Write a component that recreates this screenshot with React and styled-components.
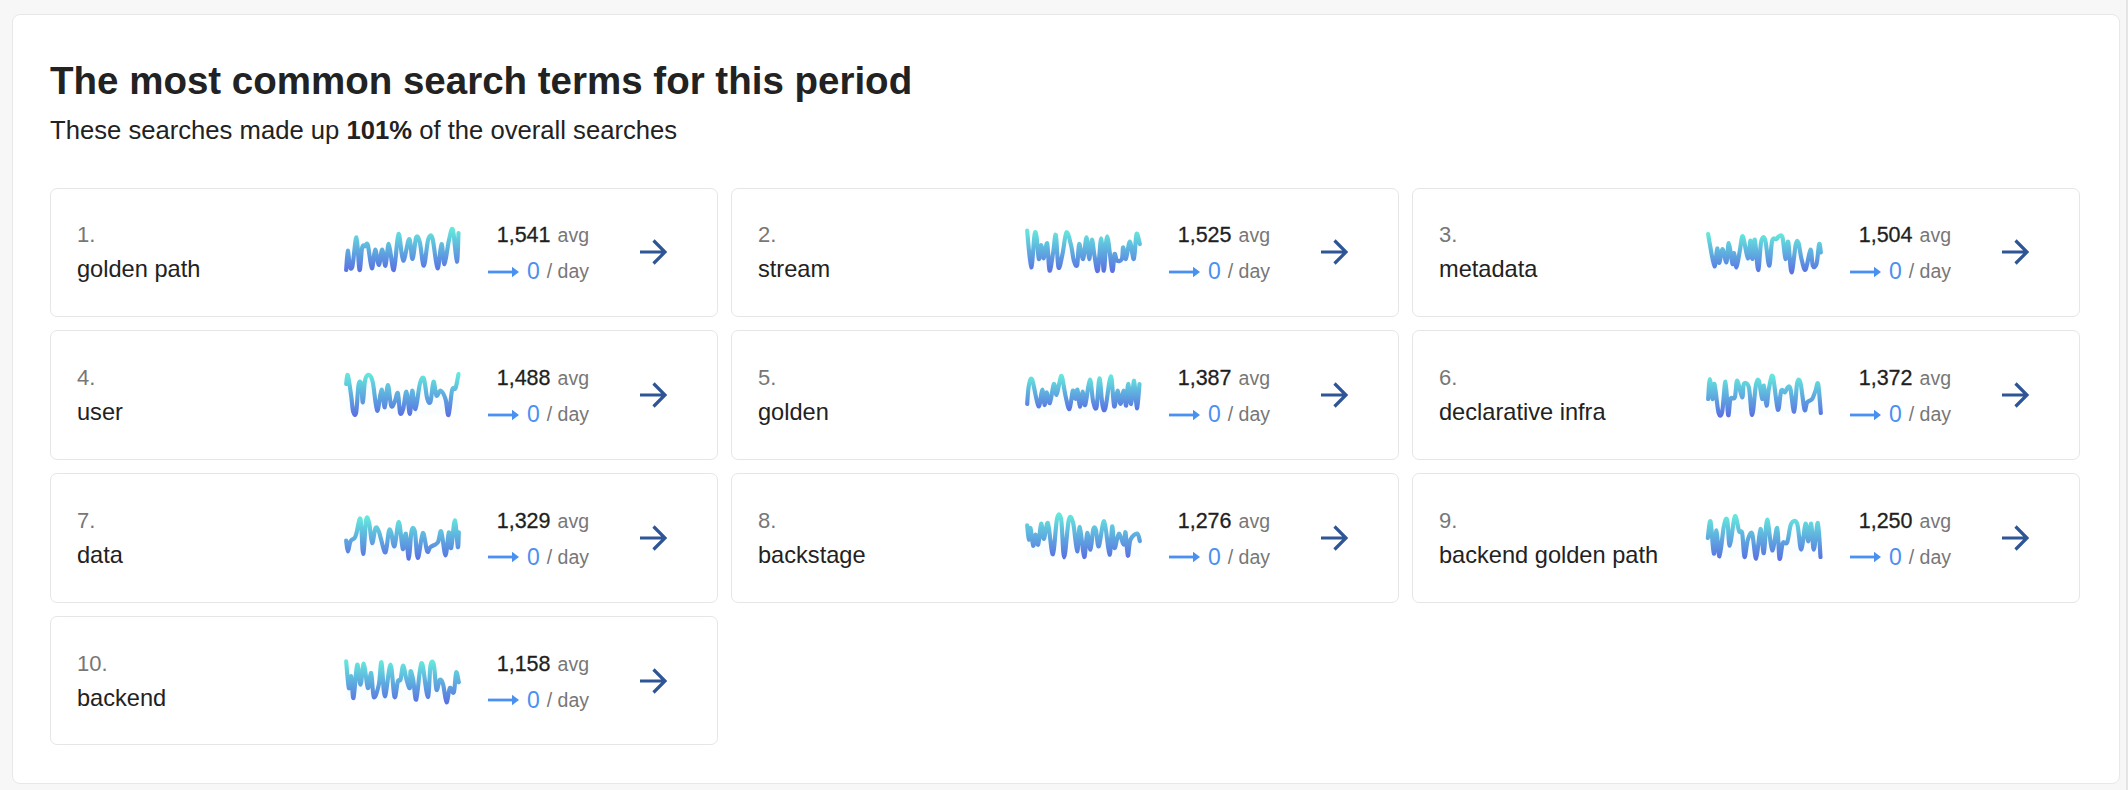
import React from 'react';
import styled, { createGlobalStyle } from 'styled-components';

const GlobalStyle = createGlobalStyle`
  html, body {
    margin: 0;
    padding: 0;
    background: #f7f7f7;
  }
  body {
    font-family: "Liberation Sans", Arial, sans-serif;
    overflow: hidden;
  }
`;

const Page = styled.div`
  box-sizing: border-box;
  width: 2128px;
  height: 790px;
  padding: 14px 6px 6px 11.5px;
  background: #f7f7f7;
  border-right: 2px solid #e5e5e5;
`;

const Panel = styled.section`
  box-sizing: border-box;
  height: 770px;
  padding: 44px 38px 0 37.5px;
  background: #fff;
  border: 1.5px solid #e8e8e8;
  border-radius: 8px;
`;

const Heading = styled.h2`
  margin: 0;
  font-size: 38.5px;
  line-height: 44px;
  font-weight: 700;
  color: #222;
`;

const Subheading = styled.p`
  margin: 11px 0 41.5px;
  font-size: 25.65px;
  line-height: 32px;
  color: #222;
`;

const Grid = styled.div`
  display: grid;
  grid-template-columns: repeat(3, 668px);
  grid-auto-rows: 129.6px;
  column-gap: 13px;
  row-gap: 13.2px;
`;

const Card = styled.article`
  box-sizing: border-box;
  display: flex;
  align-items: center;
  padding-left: 26px;
  background: #fff;
  border: 1.5px solid #e6e6e6;
  border-radius: 7px;
`;

const Term = styled.div`
  width: 264px;
  flex: none;
  padding-top: 1px;
`;

const Rank = styled.div`
  font-size: 22px;
  line-height: 34px;
  color: #777;
`;

const Name = styled.div`
  font-size: 23.6px;
  line-height: 35px;
  color: #222;
`;

const Chart = styled.svg`
  display: block;
  flex: none;
  width: 120px;
  height: 60px;
`;

const Stats = styled.div`
  width: 128px;
  flex: none;
  padding-top: 3px;
  text-align: right;
`;

const Average = styled.div`
  font-size: 21.5px;
  line-height: 36px;
  color: #1f1f1f;
  -webkit-text-stroke: 0.3px #1f1f1f;
`;

const Unit = styled.span`
  margin-left: 7px;
  font-size: 19.5px;
  color: #777;
  -webkit-text-stroke: 0;
`;

const Trend = styled.div`
  display: flex;
  align-items: center;
  justify-content: flex-end;
  line-height: 37px;
`;

const TrendValue = styled.span`
  margin-left: 8px;
  font-size: 23px;
  color: #4a90f0;
`;

const GoArrow = styled.svg`
  display: block;
  flex: none;
  width: 28px;
  height: 26px;
  margin-left: 50px;
`;

const terms = [
  { rank: 1, name: 'golden path', avg: '1,541', x0: 31.5, y0: 39, line: '47,183 52,125 58,172 66,170 78,85 87,183 95,115 103,112 112,108 124,178 134,122 145,168 155,122 165,170 175,105 190,183 204,75 218,155 236,90 246,150 257,85 268,100 280,170 293,92 306,88 321,178 333,105 342,165 355,95 367,62 379,158 384,72' },
  { rank: 2, name: 'stream', avg: '1,525', x0: 64.5, y0: 39, line: '80,65 92,175 102,78 108,82 115,150 122,108 130,148 140,103 147,185 158,130 166,78 174,175 186,135 198,70 212,110 220,155 230,168 236,105 248,150 258,85 266,150 274,92 282,140 292,185 302,88 310,185 320,82 335,185 342,135 350,155 364,150 368,115 376,150 388,98 400,150 408,75 418,105' },
  { rank: 3, name: 'metadata', avg: '1,504', x0: 37.5, y0: 39, line: '53,75 58,105 72,172 80,118 86,162 96,120 108,160 115,102 126,165 131,132 138,175 148,125 157,82 172,148 180,95 186,150 193,92 203,183 212,98 224,92 236,170 245,95 258,90 265,82 276,85 285,150 293,98 303,190 316,105 324,102 333,150 345,182 360,122 367,170 378,165 386,105 391,130' },
  { rank: 4, name: 'user', avg: '1,488', x0: 31.5, y0: 18, line: '47,75 52,48 62,110 68,158 77,160 84,78 92,75 97,130 104,62 116,48 127,70 140,155 153,92 163,145 172,78 182,140 192,130 202,102 209,162 218,150 228,98 238,165 245,95 255,150 268,75 280,58 290,118 300,128 309,68 318,110 330,95 345,120 354,168 365,92 375,88 384,45' },
  { rank: 5, name: 'golden', avg: '1,387', x0: 34.5, y0: 18, line: '50,135 55,80 65,62 84,142 95,92 102,138 108,100 118,132 130,75 138,108 147,70 154,52 165,110 177,150 187,95 195,120 201,92 208,143 216,98 224,138 238,62 248,128 258,145 267,58 276,140 285,145 301,52 311,142 321,95 330,135 340,95 347,140 353,75 362,135 371,65 379,148 387,75' },
  { rank: 6, name: 'declarative infra', avg: '1,372', x0: 37.5, y0: 18, line: '53,120 58,60 66,120 72,75 84,160 95,158 105,68 113,168 120,120 133,115 140,65 155,115 160,75 175,85 185,168 196,80 205,65 215,120 220,80 228,140 235,90 247,52 262,152 272,95 283,100 292,85 300,90 311,158 320,72 330,72 342,152 350,130 365,120 375,95 383,75 391,162' },
  { rank: 7, name: 'data', avg: '1,329', x0: 31.5, y0: 445, line: '47,543 52,575 60,545 72,535 78,520 90,478 98,583 107,480 116,490 125,550 135,505 145,515 152,540 165,578 175,515 182,518 192,560 205,487 217,568 226,522 235,597 243,515 253,515 262,595 277,520 290,575 300,562 322,548 332,515 345,587 355,518 362,565 373,482 382,562 385,518' },
  { rank: 8, name: 'backstage', avg: '1,276', x0: 34.5, y0: 445, line: '50,497 55,540 60,505 68,558 75,525 83,555 92,492 100,538 112,490 124,575 130,570 140,475 152,480 161,593 175,480 188,490 200,575 208,502 221,592 230,520 240,570 248,510 256,510 265,560 281,485 297,585 305,500 312,565 325,522 340,555 345,518 352,588 360,540 380,522 388,544' },
  { rank: 9, name: 'backend golden path', avg: '1,250', x0: 37.5, y0: 445, line: '52,535 60,485 70,582 78,512 87,590 100,500 110,480 118,558 133,470 146,515 155,520 162,592 172,540 185,522 197,597 210,508 220,580 230,480 245,572 260,505 267,597 277,550 290,548 302,492 320,492 332,570 345,492 353,545 362,492 370,570 382,490 390,592' },
  { rank: 10, name: 'backend', avg: '1,158', x0: 31.5, y0: 874, line: '47,905 55,985 62,950 69,1015 80,915 90,975 100,912 112,985 122,940 130,1012 145,975 153,908 163,1010 180,915 192,1012 202,965 210,960 218,918 228,960 238,985 240,935 248,960 257,1020 268,935 276,915 292,1012 300,918 310,915 318,990 328,960 338,975 348,1028 358,985 370,998 377,938 385,968' },
];

// rounds the traced corners off (catmull-rom turned into beziers)
const smoothPath = (pts) => {
  let d = `M${pts[0][0]} ${pts[0][1]}`;
  for (let i = 0; i < pts.length - 1; i++) {
    const p0 = pts[Math.max(i - 1, 0)];
    const p1 = pts[i];
    const p2 = pts[i + 1];
    const p3 = pts[Math.min(i + 2, pts.length - 1)];
    const c1x = p1[0] + (p2[0] - p0[0]) / 6;
    const c1y = p1[1] + (p2[1] - p0[1]) / 6;
    const c2x = p2[0] - (p3[0] - p1[0]) / 6;
    const c2y = p2[1] - (p3[1] - p1[1]) / 6;
    d += `C${c1x} ${c1y} ${c2x} ${c2y} ${p2[0]} ${p2[1]}`;
  }
  return d;
};

// traced at 3x, so the viewBox is three times the drawn size
const Sparkline = ({ id, x0, y0, line }) => {
  const pts = line.split(' ').map((p) => p.split(',').map(Number));
  const d = smoothPath(pts);
  const bottom = y0 + 148;
  return (
    <Chart viewBox={`${x0} ${y0} 360 180`}>
      <defs>
        <linearGradient id={`spark-${id}`} x1="0" y1="0" x2="0" y2="1">
          <stop offset="0%" stopColor="#64e8dc" />
          <stop offset="100%" stopColor="#5a72e2" />
        </linearGradient>
      </defs>
      <path d={`${d}L${pts[pts.length - 1][0]} ${bottom}L${pts[0][0]} ${bottom}Z`} fill="#5fd8f0" fillOpacity="0.04" />
      <path d={d} fill="none" stroke={`url(#spark-${id})`} strokeWidth="12.5" strokeLinejoin="round" strokeLinecap="round" />
    </Chart>
  );
};

const FlatArrow = () => (
  <svg width="31" height="14" viewBox="0 0 31 14">
    <path d="M0 7H25" stroke="#4a90f0" strokeWidth="2.8" fill="none" />
    <path d="M24 1.8L31 7L24 12.2Z" fill="#4a90f0" />
  </svg>
);

const RightArrow = () => (
  <GoArrow viewBox="0 0 28 26">
    <path d="M1 13H26M14.5 1.5L26 13L14.5 24.5" stroke="#2e5596" strokeWidth="3.2" fill="none" />
  </GoArrow>
);

const App = () => (
  <>
    <GlobalStyle />
    <Page>
      <Panel>
        <Heading>The most common search terms for this period</Heading>
        <Subheading>
          These searches made up <strong>101%</strong> of the overall searches
        </Subheading>
        <Grid>
          {terms.map((t) => (
            <Card key={t.rank}>
              <Term>
                <Rank>{t.rank}.</Rank>
                <Name>{t.name}</Name>
              </Term>
              <Sparkline id={t.rank} x0={t.x0} y0={t.y0} line={t.line} />
              <Stats>
                <Average>
                  {t.avg}
                  <Unit>avg</Unit>
                </Average>
                <Trend>
                  <FlatArrow />
                  <TrendValue>0</TrendValue>
                  <Unit>/ day</Unit>
                </Trend>
              </Stats>
              <RightArrow />
            </Card>
          ))}
        </Grid>
      </Panel>
    </Page>
  </>
);

export default App;
